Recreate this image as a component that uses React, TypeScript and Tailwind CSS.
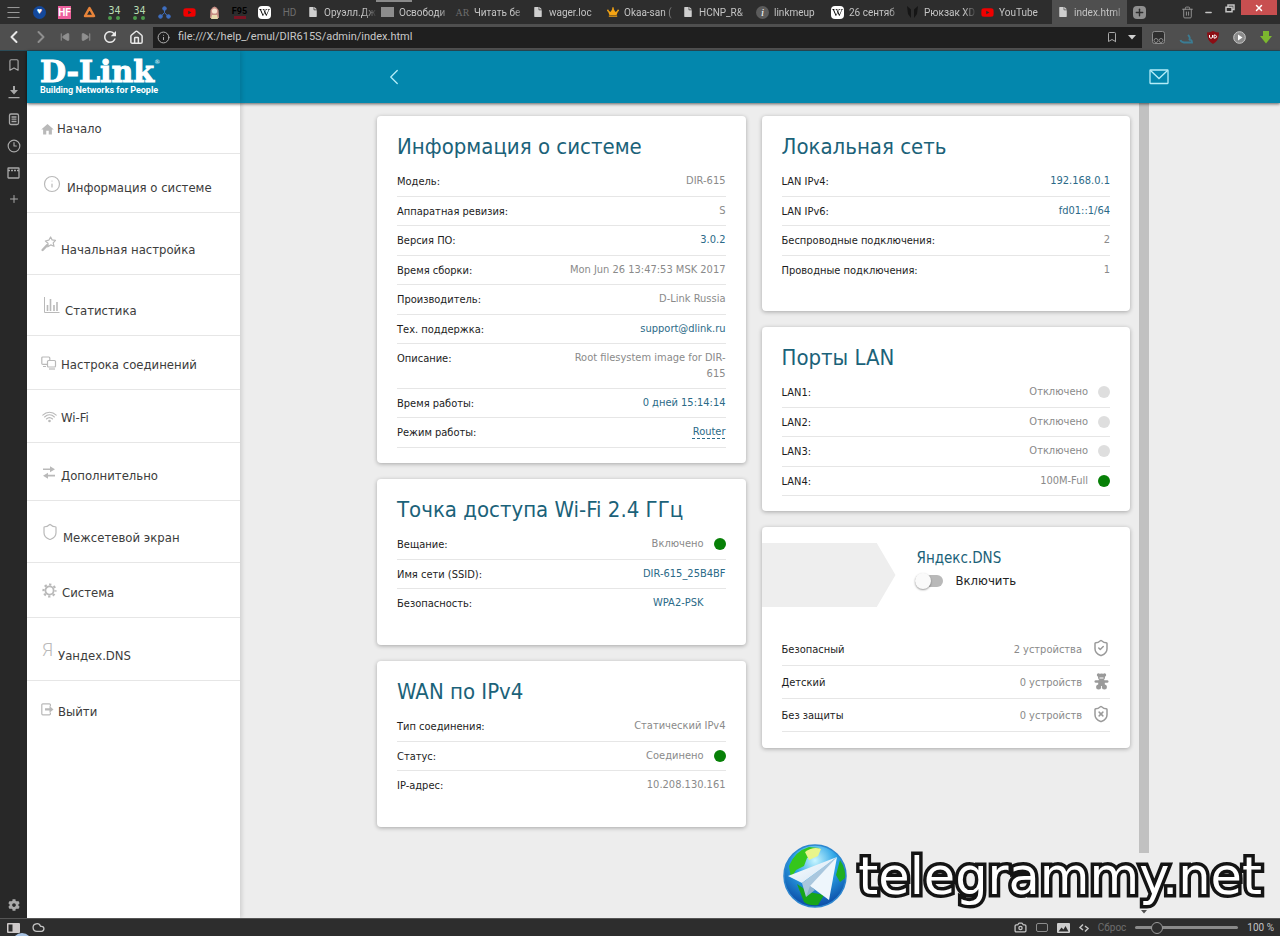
import React from "react";
import clsx from "clsx";
import {
    Bookmark,
    Camera,
    ChevronLeft,
    ChevronRight,
    Clock3,
    Cloud,
    House,
    Info,
    Menu,
    Minus,
    Plus,
    Shield,
    ShieldCheck,
    ShieldX,
    SkipBack,
    SkipForward,
    Trash2,
    X,
} from "lucide-react";
import { FaCog, FaCrown, FaFile, FaYoutube, FaWikipediaW } from "react-icons/fa";
import { MdHome, MdRefresh } from "react-icons/md";

type RowData = {
    label: string;
    value: string;
    link?: boolean;
    dashed?: boolean;
    status?: "on" | "off" | "none";
};

const systemInfo: RowData[] = [
    { label: "Модель:", value: "DIR-615" },
    { label: "Аппаратная ревизия:", value: "S" },
    { label: "Версия ПО:", value: "3.0.2", link: true },
    { label: "Время сборки:", value: "Mon Jun 26 13:47:53 MSK 2017" },
    { label: "Производитель:", value: "D-Link Russia" },
    { label: "Тех. поддержка:", value: "support@dlink.ru", link: true },
    { label: "Описание:", value: "Root filesystem image for DIR-615" },
    { label: "Время работы:", value: "0 дней 15:14:14", link: true },
    { label: "Режим работы:", value: "Router", link: true, dashed: true },
];

const wifiInfo: RowData[] = [
    { label: "Вещание:", value: "Включено", status: "on" },
    { label: "Имя сети (SSID):", value: "DIR-615_25B4BF", link: true },
    { label: "Безопасность:", value: "WPA2-PSK", link: true, status: "none" },
];

const wanInfo: RowData[] = [
    { label: "Тип соединения:", value: "Статический IPv4" },
    { label: "Статус:", value: "Соединено", status: "on" },
    { label: "IP-адрес:", value: "10.208.130.161" },
];

const lanInfo: RowData[] = [
    { label: "LAN IPv4:", value: "192.168.0.1", link: true },
    { label: "LAN IPv6:", value: "fd01::1/64", link: true },
    { label: "Беспроводные подключения:", value: "2" },
    { label: "Проводные подключения:", value: "1" },
];

const lanPorts: RowData[] = [
    { label: "LAN1:", value: "Отключено", status: "off" },
    { label: "LAN2:", value: "Отключено", status: "off" },
    { label: "LAN3:", value: "Отключено", status: "off" },
    { label: "LAN4:", value: "100M-Full", status: "on" },
];

const StarWand = () => (
    <svg width="16" height="16" viewBox="0 0 16 16" fill="none" stroke="currentColor" strokeWidth="1.2" strokeLinejoin="round">
        <path d="M9.6 1l1.5 2.9 3.4.4-2.3 2.5.8 3.5-3.3-1.4-2.9 1.9.2-3.5L4.4 5l3.4-.8z" />
        <path d="M6.2 9.2L1.6 14" strokeWidth="2.4" strokeLinecap="round" />
    </svg>
);

const Bars = () => (
    <svg width="17" height="17" viewBox="0 0 17 17" stroke="currentColor" fill="none">
        <path d="M1.500 0v15.500H16.500" strokeWidth="1" />
        <path d="M4.500 14V8M7.500 14V2M11 14V8M14 14V5" strokeWidth="1.600" />
    </svg>
);

const Screens = () => (
    <svg width="16" height="14" viewBox="0 0 16 14" stroke="currentColor" fill="none" strokeWidth="1.2">
        <path d="M6 8.400H1.800A1 1 0 0 1 .8 7.400V2a1 1 0 0 1 1-1h6a1 1 0 0 1 1 1v2M2 10.500h3" />
        <rect x="6.500" y="4.500" width="8" height="6.500" rx="1" />
        <path d="M8 13h6" />
    </svg>
);

const WifiWaves = () => (
    <svg width="15" height="12" viewBox="0 0 15 12" stroke="currentColor" fill="none" strokeWidth="1.1" strokeLinecap="round">
        <path d="M.8 4.200C4.600.300 10.400.300 14.200 4.200M2.600 6c2.900-2.800 6.900-2.800 9.800 0M4.400 8c1.900-1.700 4.300-1.700 6.200 0" />
        <circle cx="7.500" cy="10" r="1.300" fill="currentColor" stroke="none" />
    </svg>
);

const Swap = () => (
    <svg width="14" height="13" viewBox="0 0 14 13" fill="currentColor">
        <path d="M1 2.500h7V.200L13 3.200 8 6.200V4H1zM13 8.800H6V6.700L1 9.700l5 3v-2.300h7z" />
    </svg>
);

const Gear = () => (
    <svg width="15" height="15" viewBox="0 0 15 15" fill="none" stroke="currentColor">
        <circle cx="7.500" cy="7.500" r="4.100" strokeWidth="1.800" />
        <circle cx="7.500" cy="7.500" r="6" strokeWidth="2.200" strokeDasharray="2.300 2.412" strokeDashoffset="1.150" />
    </svg>
);

const Exit = () => (
    <svg width="13" height="13" viewBox="0 0 13 13" fill="none" stroke="currentColor" strokeWidth="1.2">
        <path d="M9.400 3.500V1.800a1 1 0 0 0-1-1H1.800a1 1 0 0 0-1 1v9a1 1 0 0 0 1 1h6.600a1 1 0 0 0 1-1V9.500" />
        <path d="M4 5.200h4.500V3L12.500 6.400 8.500 9.800V7.600H4z" fill="currentColor" stroke="none" />
    </svg>
);

// each icon carries its own box, the labels sit on the bottom of it
const menu = [
    { label: "Начало", box: "w-5 h-5", icon: <MdHome size={15} /> },
    { label: "Информация о системе", box: "w-[30px] h-[29px]", icon: <Info size={18} strokeWidth={1.6} /> },
    { label: "Начальная настройка", box: "w-6 h-8", icon: <StarWand /> },
    { label: "Статистика", box: "w-7 h-[31px]", icon: <Bars /> },
    { label: "Настрока соединений", box: "w-6 h-6", icon: <Screens /> },
    { label: "Wi-Fi", box: "w-6 h-[23px]", icon: <WifiWaves /> },
    { label: "Дополнительно", box: "w-6 h-[28px]", icon: <Swap /> },
    { label: "Межсетевой экран", box: "w-[26px] h-8", icon: <Shield size={18} strokeWidth={1.6} /> },
    { label: "Система", box: "w-[25px] h-[25px]", icon: <Gear /> },
    { label: "Уандех.DNS", box: "w-[21px] h-[33px]", icon: <span className="font-['Roboto',sans-serif] text-lg leading-5 font-light">Я</span> },
    { label: "Выйти", box: "w-[21px] h-[26px]", icon: <Exit /> },
];

const BearIcon = () => (
    <svg width="15" height="17" viewBox="0 0 15 17" fill="currentColor">
        <circle cx="4.500" cy="2" r="1.700" />
        <circle cx="10.500" cy="2" r="1.700" />
        <circle cx="7.500" cy="4" r="3.500" />
        <rect x=".5" y="7.200" width="14" height="2.600" rx="1.300" />
        <rect x="4.200" y="7" width="6.600" height="6" rx="1.500" />
        <circle cx="4.600" cy="14" r="2.500" />
        <circle cx="10.400" cy="14" r="2.500" />
        <path d="M5.500 5h4" stroke="#fff" strokeWidth="1" />
    </svg>
);

const dnsModes = [
    { label: "Безопасный", value: "2 устройства", icon: <ShieldCheck size={18} strokeWidth={2} /> },
    { label: "Детский", value: "0 устройств", icon: <BearIcon /> },
    { label: "Без защиты", value: "0 устройств", icon: <ShieldX size={18} strokeWidth={2} /> },
];

const digits = (
    <span className="flex flex-col items-center text-[#b9dcb4]">
        <span className="font-['DejaVu_Sans_Mono',monospace] text-[10px] leading-[11px]">34</span>
        <i className="h-[3px] w-3 border-x-4 border-dotted border-[#4c9a4c]" />
    </span>
);

const pinned = [
    { name: "Здоровье", icon: <span className="flex size-[13px] items-center justify-center rounded-full bg-[#14489b] text-[9px] text-white">♥</span> },
    { name: "HF", icon: <span className="flex size-[13px] items-center justify-center bg-[#ec5f9c] text-[10px] font-bold text-white">HF</span> },
    {
        name: "Треугольник",
        icon: (
            <svg width="13" height="12" viewBox="0 0 13 12">
                <path d="M6.500 2L11 10H2z" fill="none" stroke="#e8843a" strokeWidth="2.500" strokeLinejoin="round" />
            </svg>
        ),
    },
    { name: "34", icon: digits },
    { name: "34 (2)", icon: digits },
    {
        name: "Схема",
        icon: (
            <svg width="13" height="13" viewBox="0 0 13 13" fill="#3f6fc0" stroke="#3f6fc0">
                <path d="M6.500 2.500v4L2.500 11M6.500 6.500l4 4.500" fill="none" />
                <circle cx="6.500" cy="2.500" r="1.800" />
                <circle cx="2.500" cy="10.500" r="1.800" />
                <circle cx="10.500" cy="10.500" r="1.800" />
            </svg>
        ),
    },
    { name: "YouTube", icon: <FaYoutube size={13} className="text-[#f00000]" /> },
    {
        name: "Аниме",
        icon: (
            <svg width="11" height="13" viewBox="0 0 11 13">
                <path d="M1.500 4Q5.500-3 9.500 4L10 12H1z" fill="#c98f86" />
                <circle cx="5.500" cy="5" r="2.600" fill="#f7e3cf" />
                <path d="M3 9h5l1 4H2z" fill="#e9dcae" />
            </svg>
        ),
    },
    { name: "F95", icon: <span className="flex flex-col items-center text-[9px] font-bold leading-[10px] text-black">F95<i className="h-[3px] w-3 bg-[#7a1423]" /></span> },
    { name: "Википедия", icon: <span className="flex size-[13px] items-center justify-center rounded-sm bg-white text-black"><FaWikipediaW size={11} /></span> },
    { name: "HD", icon: <span className="text-[10px] text-[#6d6d6d]">HD</span> },
];

const page = <FaFile size={10} className="text-[#cfcfcf]" />;

const tabs = [
    { title: "Оруэлл.Дж", icon: page },
    { title: "Освободи", icon: <span className="h-[10px] w-[13px] bg-[#8d8d8d]" /> },
    { title: "Читать бе", icon: <span className="font-['Liberation_Serif',serif] text-[10px] text-[#6c6c6c]">AR</span> },
    { title: "wager.loc", icon: page },
    { title: "Okaa-san (", icon: <FaCrown size={12} className="text-[#f5a413]" /> },
    { title: "HCNP_R&", icon: page },
    { title: "linkmeup", icon: <span className="flex size-[13px] items-center justify-center rounded-full bg-[#5c5c5c] font-['Liberation_Serif',serif] text-[11px] italic text-white">i</span> },
    { title: "26 сентяб", icon: <span className="flex size-[13px] items-center justify-center rounded-sm bg-white text-black"><FaWikipediaW size={11} /></span> },
    {
        title: "Рюкзак XD",
        icon: (
            <svg width="11" height="12" viewBox="0 0 11 12" fill="#151515">
                <path d="M0 0l4 3.500V12L1 8zM11 0L7 3.500V12l3-4z" />
            </svg>
        ),
    },
    { title: "YouTube", icon: <FaYoutube size={13} className="text-[#f00000]" /> },
    { title: "index.html", icon: page, active: true },
];

function TabStrip() {
    return (
        <div className="relative flex h-6 shrink-0 items-center bg-[#2d2d2d] text-[#c4c4c4]">
            <span className="absolute left-[376px] top-0 h-[2px] w-9 bg-[#8a8a8a]" />
            <button type="button" aria-label="Меню" className="flex w-[27px] shrink-0 items-center justify-center">
                <Menu size={17} strokeWidth={1.4} className="text-[#9b9b9b]" />
            </button>
            {pinned.map((tab) => (
                <button key={tab.name} type="button" aria-label={tab.name} className="flex w-[25px] shrink-0 items-center justify-center">
                    {tab.icon}
                </button>
            ))}
            <div className="flex min-w-0 shrink self-stretch">
                {tabs.map((tab) => (
                    <button
                        key={tab.title}
                        type="button"
                        className={clsx(
                            "flex w-[75px] min-w-0 items-center gap-1 pl-[3px] text-[10px]",
                            tab.active && "bg-[#4f4f4f]",
                        )}
                    >
                        <span className="flex w-[15px] shrink-0 justify-center">{tab.icon}</span>
                        <span className="min-w-0 flex-1 overflow-hidden whitespace-nowrap text-left [mask-image:linear-gradient(to_right,black_75%,transparent)]">
                            {tab.title}
                        </span>
                    </button>
                ))}
            </div>
            <button type="button" aria-label="Новая вкладка" className="ml-1.5 flex size-[13px] shrink-0 items-center justify-center rounded-sm bg-[#8f8f8f] text-[#2d2d2d]">
                <Plus size={11} strokeWidth={3} />
            </button>
            <div className="ml-auto flex shrink-0 items-center self-stretch pr-[3px]">
                <button type="button" aria-label="Закрытые вкладки" className="mr-2.5">
                    <Trash2 size={13} strokeWidth={1.8} className="text-[#929292]" />
                </button>
                <button type="button" aria-label="Свернуть" className="mr-3">
                    <Minus size={9} strokeWidth={4} />
                </button>
                <button type="button" aria-label="Развернуть" className="mr-1.5 self-start pt-1">
                    <svg width="10" height="9" viewBox="0 0 10 9" fill="none" stroke="#c4c4c4" strokeWidth="1.500">
                        <path d="M3 3V1h6v4.500H7.500M1 3.200h6v4.600H1z" />
                    </svg>
                </button>
                <button type="button" aria-label="Закрыть" className="flex h-[15px] w-9 items-center justify-center self-start bg-[#c84f50] text-white">
                    <X size={10} strokeWidth={3.5} />
                </button>
            </div>
        </div>
    );
}

function AddressBar() {
    return (
        <div className="flex h-[27px] shrink-0 items-center border-b border-[#2b4c58] bg-[#4f4f4f] text-[#e8e8e8]">
            <div className="flex w-[153px] shrink-0 items-center">
                <button type="button" aria-label="Назад" className="flex w-[27px] justify-center"><ChevronLeft size={20} strokeWidth={2.4} /></button>
                <button type="button" aria-label="Вперёд" className="flex w-[27px] justify-center text-[#8f8f8f]"><ChevronRight size={20} strokeWidth={2.4} /></button>
                <button type="button" aria-label="В начало" className="flex w-[21px] justify-center text-[#8f8f8f]"><SkipBack size={10} fill="currentColor" strokeWidth={2.5} /></button>
                <button type="button" aria-label="В конец" className="flex w-[21px] justify-center text-[#8f8f8f]"><SkipForward size={10} fill="currentColor" strokeWidth={2.5} /></button>
                <button type="button" aria-label="Обновить" className="flex w-[27px] justify-center"><MdRefresh size={18} /></button>
                <button type="button" aria-label="Домой" className="flex w-[27px] justify-center"><House size={15} strokeWidth={2.4} /></button>
            </div>
            <div className="flex h-[21px] min-w-0 flex-1 items-center bg-[#1f1f1f] pl-1">
                <Info size={13} strokeWidth={1.8} className="shrink-0 text-[#b5b5b5]" />
                <input
                    type="text"
                    aria-label="Адрес"
                    defaultValue="file:///X:/help_/emul/DIR615S/admin/index.html"
                    className="min-w-0 flex-1 bg-transparent pl-2 text-[11px] text-[#c9c9c9] outline-none"
                />
                <button type="button" aria-label="В закладки" className="mr-2.5"><Bookmark size={12} className="text-[#a9a9a9]" /></button>
                <button type="button" aria-label="История адресов" className="mr-1.5">
                    <svg width="8" height="5" viewBox="0 0 8 5" fill="#d0d0d0"><path d="M0 0h8L4 4.500z" /></svg>
                </button>
            </div>
            <div className="flex shrink-0 items-center gap-[14px] pl-[10px] pr-2">
                <button type="button" aria-label="Tampermonkey">
                    <svg width="13" height="13" viewBox="0 0 13 13" fill="none">
                        <rect x=".5" y=".5" width="12" height="12" rx="2" fill="#2e2e2e" stroke="#8b8b8b" />
                        <circle cx="4" cy="9.500" r="2" stroke="#8b8b8b" />
                        <circle cx="9" cy="9.500" r="2" stroke="#8b8b8b" />
                    </svg>
                </button>
                <button type="button" aria-label="Погода">
                    <svg width="14" height="13" viewBox="0 0 14 13" fill="none" stroke="#3b7c93" strokeWidth="1.800">
                        <path d="M9 4q3 3 1 5 3-1 3 2.500H5Q2 11 1.500 9" />
                    </svg>
                </button>
                <button type="button" aria-label="uBlock">
                    <svg width="12" height="13" viewBox="0 0 12 13">
                        <path d="M6 0q3 1.500 6 1.500Q12 10 6 13 0 10 0 1.500 3 1.500 6 0z" fill="#8c0d14" />
                        <path d="M2.500 4v2.500q1.500 1.500 3 0V4M7 4v3.200q3 0 2.500-2Q9 3.900 7 4" fill="none" stroke="#fff" />
                    </svg>
                </button>
                <button type="button" aria-label="Плеер">
                    <svg width="13" height="13" viewBox="0 0 13 13">
                        <circle cx="6.500" cy="6.500" r="5.800" fill="#8a8a8a" stroke="#c9c9c9" />
                        <path d="M5 3.500l4.500 3L5 9.500z" fill="#fff" />
                    </svg>
                </button>
                <button type="button" aria-label="Загрузчик">
                    <svg width="12" height="13" viewBox="0 0 12 13" fill="#7cb82f">
                        <path d="M3 0h6v5h3l-6 7.500L0 5h3z" />
                    </svg>
                </button>
            </div>
        </div>
    );
}

function SidePanel() {
    return (
        <aside className="flex w-[27px] shrink-0 flex-col items-center bg-[#282828] pb-[7px] pt-[7px] text-[#a8a8a8]">
            <div className="flex flex-col items-center gap-[13px]">
                <button type="button" aria-label="Закладки"><Bookmark size={14} /></button>
                <button type="button" aria-label="Загрузки">
                    <svg width="12" height="14" viewBox="0 0 12 14" fill="currentColor">
                        <path d="M5 1h2v4h3L6 9.500 2 5h3zM.500 12h11v1.300H.500z" />
                    </svg>
                </button>
                <button type="button" aria-label="Заметки">
                    <svg width="12" height="14" viewBox="0 0 12 14" fill="none" stroke="currentColor" strokeWidth="1.300">
                        <rect x="1.500" y="2" width="9" height="10.500" rx="1.500" />
                        <path d="M3.500 5h5M3.500 7.200h5M3.500 9.500h5" />
                    </svg>
                </button>
                <button type="button" aria-label="История"><Clock3 size={14} /></button>
                <button type="button" aria-label="Окна">
                    <svg width="13" height="14" viewBox="0 0 13 14" fill="none" stroke="currentColor" strokeWidth="1.300">
                        <rect x="1" y="2" width="11" height="10" rx=".5" />
                        <path d="M1 4.500h11" strokeDasharray="2 1" />
                    </svg>
                </button>
                <button type="button" aria-label="Добавить панель"><Plus size={12} /></button>
            </div>
            <button type="button" aria-label="Настройки" className="mt-auto"><FaCog size={12} /></button>
        </aside>
    );
}

function StatusDot({ status }: { status: RowData["status"] }) {
    return (
        <span
            className={clsx(
                "ml-[10px] size-3 shrink-0 rounded-full",
                status === "on" && "bg-[#078007]",
                status === "off" && "bg-[#dedede]",
            )}
        />
    );
}

function Row({ row }: { row: RowData }) {
    return (
        <div className="flex items-start justify-between border-b border-[#e6e6e6] py-1.5 even:pb-[5px]">
            <dt className="text-[11px] leading-[17px] text-[#1c1c1c]">{row.label}</dt>
            <dd className="flex max-w-[164px] items-center text-right text-[11px] leading-4 text-[#8a8a8a]">
                {row.link ? (
                    <a href="#" className={clsx("text-[#2b6a88]", row.dashed && "underline decoration-dashed underline-offset-3")}>
                        {row.value}
                    </a>
                ) : (
                    <span>{row.value}</span>
                )}
                {row.status && <StatusDot status={row.status} />}
            </dd>
        </div>
    );
}

type CardProps = {
    title: string;
    rows: RowData[];
    openEnd?: boolean;
};

function Card({ title, rows, openEnd }: CardProps) {
    return (
        <section
            className={clsx(
                "rounded-sm bg-white px-5 pt-[15px] shadow-[0_1px_4px_rgba(0,0,0,0.3)]",
                openEnd ? "pb-[26px]" : "pb-[15px]",
            )}
        >
            <h2 className="pb-1 text-[22px] leading-8 text-[#1b6279]">{title}</h2>
            <dl className={clsx(openEnd && "[&>div:last-child]:border-transparent")}>
                {rows.map((row) => (
                    <Row key={row.label} row={row} />
                ))}
            </dl>
        </section>
    );
}

function DnsCard() {
    return (
        <section className="rounded-sm bg-white pb-4 pt-4 shadow-[0_1px_4px_rgba(0,0,0,0.3)]">
            <div className="flex">
                <div className="h-16 w-[134px] bg-[#eeeeee] [clip-path:polygon(0_0,86%_0,100%_50%,86%_100%,0_100%)]" />
                <div className="ml-[19px] pt-1">
                    <h2 className="pl-0.5 text-[15px] leading-[22px] text-[#1b6279]">Яндекс.DNS</h2>
                    <label className="flex items-center gap-[13px] pt-0.5 text-[13px] leading-5 text-[#222222]">
                        <input
                            type="checkbox"
                            className="relative h-3 w-7 appearance-none rounded-full bg-[#b9b9b9] before:absolute before:-top-0.5 before:left-0 before:size-4 before:rounded-full before:bg-[#fafafa] before:shadow-[0_1px_2px_rgba(0,0,0,0.4)] before:content-['']"
                        />
                        Включить
                    </label>
                </div>
            </div>
            <dl className="mt-[26px] px-5">
                {dnsModes.map((mode) => (
                    <div key={mode.label} className="flex items-center justify-between border-b border-[#e6e6e6] pb-1.5 pt-2">
                        <dt className="text-[11px] leading-[18px] text-[#1c1c1c]">{mode.label}</dt>
                        <dd className="flex items-start text-[11px] leading-[18px] text-[#8a8a8a]">
                            {mode.value}
                            <span className="-mt-0.5 ml-2.5 flex h-[18px] w-[18px] items-center justify-center text-[#9a9a9a]">{mode.icon}</span>
                        </dd>
                    </div>
                ))}
            </dl>
        </section>
    );
}

function Router() {
    return (
        <div className="relative flex min-w-0 flex-1 flex-col bg-[#ededed] font-['DejaVu_Sans_Condensed','Noto_Sans',sans-serif]">
            <header className="relative z-10 flex h-[52px] shrink-0 bg-[#0387ad] text-white shadow-[0_1px_3px_rgba(0,0,0,0.6)]">
                <a href="#" className="flex w-[213px] shrink-0 flex-col pl-[13px] pt-[7px] shadow-[2px_0_4px_rgba(0,0,0,0.12)]">
                    <span className="flex font-['DejaVu_Serif',serif] text-3xl leading-7 font-bold [-webkit-text-stroke:1px_white]">
                        D-Link<sup className="pt-1 text-[6px] leading-none font-normal [-webkit-text-stroke:0]">®</sup>
                    </span>
                    <span className="whitespace-nowrap font-['Roboto',sans-serif] text-[9px] leading-[9px] font-bold">
                        Building Networks for People
                    </span>
                </a>
                <div className="flex flex-1 items-center justify-between pl-[141px] pr-[111px]">
                    <button type="button" aria-label="Назад"><ChevronLeft size={26} strokeWidth={1.2} className="text-[#b5edf8]" /></button>
                    <button type="button" aria-label="Сообщения">
                        <svg width="20" height="16" viewBox="0 0 20 16" fill="none" stroke="#b5edf8" strokeWidth="1.300">
                            <rect x="1" y="1" width="18" height="13.500" rx=".5" />
                            <path d="M1.500 1.500L10 9.500l8.500-8" />
                        </svg>
                    </button>
                </div>
            </header>
            <div className="flex flex-1">
                <nav className="w-[213px] shrink-0 bg-white pt-px shadow-[2px_0_4px_rgba(0,0,0,0.12)]">
                    <ul>
                        {menu.map((item) => (
                            <li key={item.label} className="border-b border-[#e6e6e6] last:border-transparent">
                                <a href="#" className="flex items-end pb-3.5 pl-2.5 pt-[15px] text-[13px] leading-5 text-[#3c3c3c]">
                                    <span className={clsx("flex shrink-0 items-center justify-center text-[#b9b9b9]", item.box)}>{item.icon}</span>
                                    {item.label}
                                </a>
                            </li>
                        ))}
                    </ul>
                </nav>
                <main className="flex flex-1 pl-[137px] pr-[131px]">
                    <div className="grid flex-1 grid-cols-2 items-start gap-4 pt-[13px]">
                        <div className="flex flex-col gap-4">
                            <Card title="Информация о системе" rows={systemInfo} />
                            <Card title="Точка доступа Wi-Fi 2.4 ГГц" rows={wifiInfo} openEnd />
                            <Card title="WAN по IPv4" rows={wanInfo} openEnd />
                        </div>
                        <div className="flex flex-col gap-4">
                            <Card title="Локальная сеть" rows={lanInfo} openEnd />
                            <Card title="Порты LAN" rows={lanPorts} />
                            <DnsCard />
                        </div>
                    </div>
                    <div className="ml-[9px] flex w-2.5 flex-col items-center justify-between">
                        <span className="h-[92%] w-full bg-[#c1c1c1]" />
                        <svg className="mb-1" width="6" height="4" viewBox="0 0 6 4" fill="#505050"><path d="M0 0h6L3 3.500z" /></svg>
                    </div>
                </main>
            </div>
            {/* Watermark */}
            <div className="absolute bottom-2.5 right-[18px] z-20 flex items-center gap-[11px]">
                <svg width="64" height="64" viewBox="0 0 64 64">
                    <defs>
                        <radialGradient id="sea" cx="50%" cy="25%" r="75%">
                            <stop offset="0" stopColor="#c9f6ff" />
                            <stop offset=".45" stopColor="#2aa3e6" />
                            <stop offset="1" stopColor="#0b4aa5" />
                        </radialGradient>
                        <linearGradient id="plane" x1="0" y1="0" x2="1" y2="1">
                            <stop offset="0" stopColor="#ffffff" />
                            <stop offset="1" stopColor="#cfe3f3" />
                        </linearGradient>
                    </defs>
                    <circle cx="32" cy="32" r="31" fill="url(#sea)" stroke="#2d86cf" strokeWidth="1.500" />
                    <path d="M6 22Q12 7 26 3l10 1-4 7-8 3-3 8-8 4-5 8z" fill="#35c61c" />
                    <path d="M22 8q8-6 16-3l-3 7-9 4z" fill="#e9f58a" />
                    <path d="M57 16q6 9 5 18l-5 4-4-7z" fill="#1fae22" />
                    <path d="M14 40l12 8 15 3-6 10q-9 1-14-3z" fill="#17a51a" />
                    <path d="M54 13L5 32l14 7z" fill="url(#plane)" />
                    <path d="M54 13L19 39l4 14 6-9z" fill="#a9c7de" />
                    <path d="M54 13L27 42l19 14z" fill="#eef6fc" />
                    <path d="M27 42l-4 11 9-7z" fill="#8fb3cf" />
                </svg>
                <span className="font-['DejaVu_Sans',sans-serif] text-[51px] leading-none text-white [-webkit-text-stroke:7px_#141414] [paint-order:stroke_fill]">
                    telegrammy.net
                </span>
            </div>
        </div>
    );
}

function StatusBar() {
    return (
        <footer className="relative flex h-[18px] shrink-0 items-center overflow-hidden border-t border-[#555555] bg-[#2d2d2d] pl-[7px] pr-1.5 text-[#c4c4c4]">
            <span className="absolute left-3 top-[14px] size-5 rounded-full bg-[#a9c4e4]" />
            <button type="button" aria-label="Панель">
                <svg width="13" height="10" viewBox="0 0 13 10">
                    <rect width="13" height="10" rx="1" fill="#cfcaca" />
                    <rect x="1.500" y="1.500" width="4" height="7" fill="#2d2d2d" />
                </svg>
            </button>
            <button type="button" aria-label="Синхронизация" className="ml-3"><Cloud size={13} strokeWidth={2.4} /></button>
            <div className="ml-auto flex items-center gap-[9px] text-[10px]">
                <button type="button" aria-label="Снимок"><Camera size={13} strokeWidth={2.4} /></button>
                <button type="button" aria-label="Окно" className="h-[9px] w-3 rounded-xs border border-[#8c8c8c]" />
                <button type="button" aria-label="Изображения">
                    <svg width="13" height="10" viewBox="0 0 13 10">
                        <rect width="13" height="10" rx="1" fill="#cfcfcf" />
                        <path d="M1.500 8.500l3-4 2 2 2-3.500 3 5.500z" fill="#2d2d2d" />
                    </svg>
                </button>
                <button type="button" aria-label="Код">
                    <svg width="10" height="8" viewBox="0 0 10 8" fill="none" stroke="#c4c4c4" strokeWidth="1.500"><path d="M4 .500L1 3.500l3 2.500M6 2l3 2.500L6 7.500" /></svg>
                </button>
                <button type="button" className="text-[#6e6e6e]">Сброс</button>
                <input
                    type="range"
                    aria-label="Масштаб"
                    defaultValue={17}
                    className="h-[3px] w-[103px] appearance-none rounded-full bg-[#8a8a8a] [&::-webkit-slider-thumb]:size-3 [&::-webkit-slider-thumb]:appearance-none [&::-webkit-slider-thumb]:rounded-full [&::-webkit-slider-thumb]:border [&::-webkit-slider-thumb]:border-[#9a9a9a] [&::-webkit-slider-thumb]:bg-[#2d2d2d]"
                />
                <span>100 %</span>
            </div>
        </footer>
    );
}

export default function App() {
    return (
        <div className="flex min-h-screen flex-col font-['Roboto','Noto_Sans',sans-serif]">
            <TabStrip />
            <AddressBar />
            <div className="flex flex-1">
                <SidePanel />
                <Router />
            </div>
            <StatusBar />
        </div>
    );
}
